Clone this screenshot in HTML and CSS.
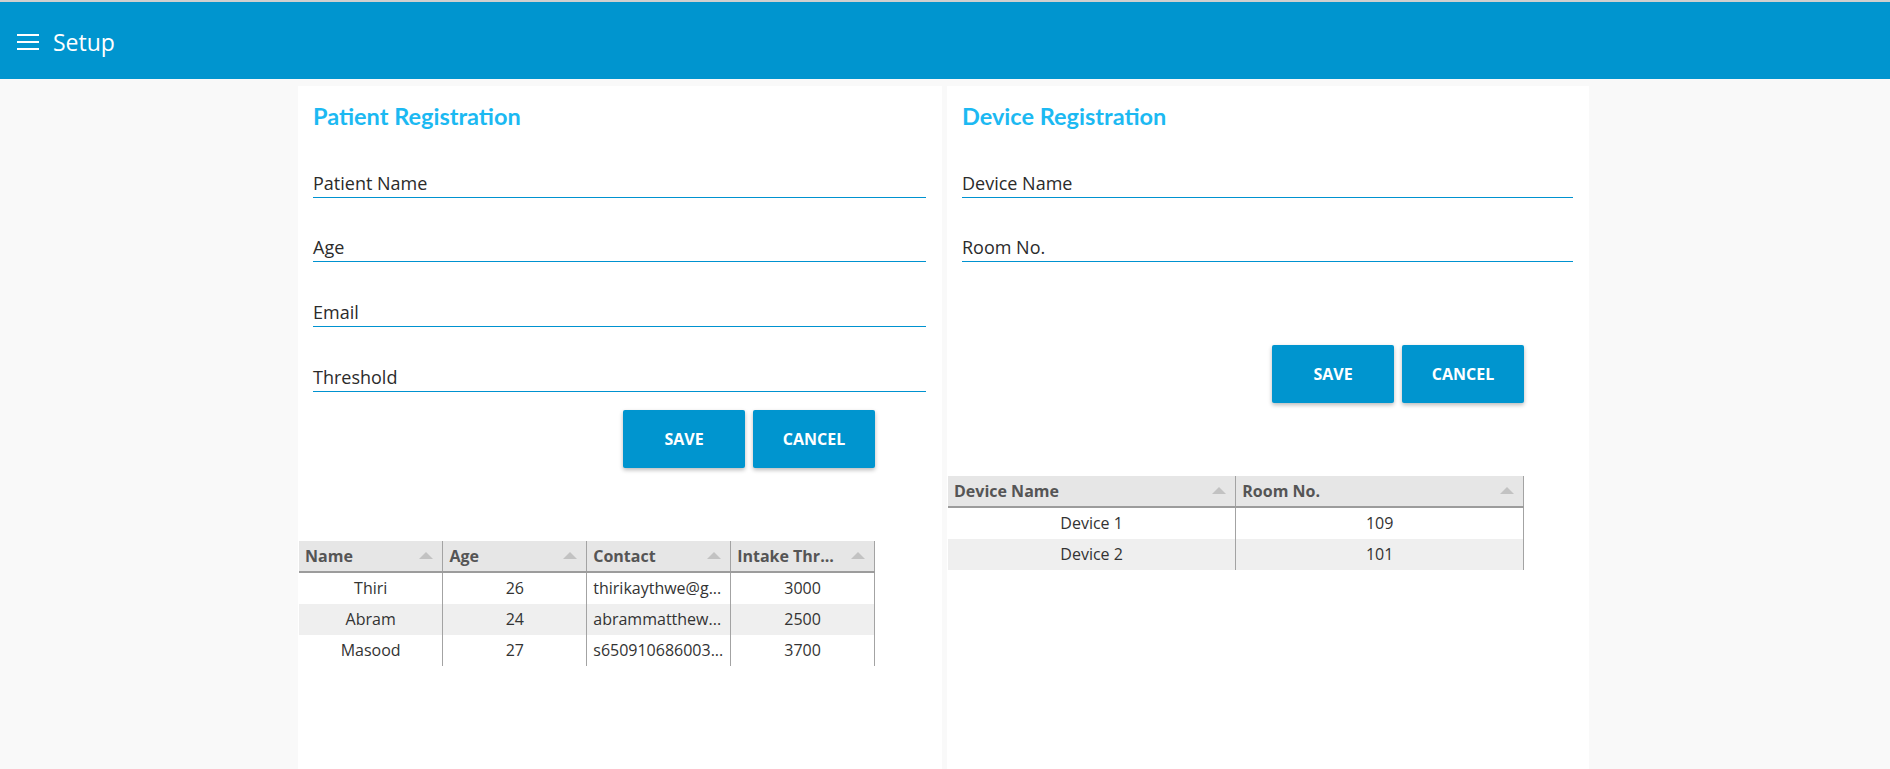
FILE: index.html
```html
<!DOCTYPE html>
<html>
<head>
<meta charset="utf-8">
<title>Setup</title>
<link rel="stylesheet" href="styles.css">
</head>
<body>
<div class="topline"></div>
<header class="appbar">
  <svg class="menu-icon" width="22" height="16" viewBox="0 0 22 16" aria-hidden="true">
    <path d="M0 1h22M0 8h22M0 15h22" stroke="#fff" stroke-width="2"/>
  </svg>
  <span class="appbar-title">Setup</span>
</header>
<main class="page">
  <section class="card">
    <div class="form">
      <h2 class="card-title">Patient Registration</h2>
      <div class="field"><span class="field-label">Patient Name</span></div>
      <div class="field"><span class="field-label">Age</span></div>
      <div class="field"><span class="field-label">Email</span></div>
      <div class="field"><span class="field-label">Threshold</span></div>
    </div>
    <div class="lower">
      <div class="actions">
        <button class="btn">SAVE</button>
        <button class="btn">CANCEL</button>
      </div>
      <table class="grid">
        <thead>
          <tr>
            <th><span>Name</span><i class="sort"></i></th>
            <th><span>Age</span><i class="sort"></i></th>
            <th><span>Contact</span><i class="sort"></i></th>
            <th><span>Intake Thr...</span><i class="sort"></i></th>
          </tr>
        </thead>
        <tbody>
          <tr><td>Thiri</td><td>26</td><td class="left">thirikaythwe@g...</td><td>3000</td></tr>
          <tr class="alt"><td>Abram</td><td>24</td><td class="left">abrammatthew...</td><td>2500</td></tr>
          <tr><td>Masood</td><td>27</td><td class="left">s650910686003...</td><td>3700</td></tr>
        </tbody>
      </table>
    </div>
  </section>
  <section class="card">
    <div class="form">
      <h2 class="card-title">Device Registration</h2>
      <div class="field"><span class="field-label">Device Name</span></div>
      <div class="field"><span class="field-label">Room No.</span></div>
      <div class="field-spacer"></div>
    </div>
    <div class="lower">
      <div class="actions">
        <button class="btn">SAVE</button>
        <button class="btn">CANCEL</button>
      </div>
      <table class="grid">
        <thead>
          <tr>
            <th><span>Device Name</span><i class="sort"></i></th>
            <th><span>Room No.</span><i class="sort"></i></th>
          </tr>
        </thead>
        <tbody>
          <tr><td>Device 1</td><td>109</td></tr>
          <tr class="alt"><td>Device 2</td><td>101</td></tr>
        </tbody>
      </table>
    </div>
  </section>
</main>
</body>
</html>
```
FILE: styles.css
```css
html, body {
  margin: 0;
  padding: 0;
}
body {
  background: #f9f9f9;
  font-family: "Open Sans", "Noto Sans", sans-serif;
  color: #333;
  min-height: 100vh;
  overflow: hidden;
}
.topline {
  height: 2px;
  background: #cfcfcf;
}
.appbar {
  height: 77px;
  background: #0095cf;
  display: flex;
  align-items: center;
  padding: 3px 0 0 17px;
  box-sizing: border-box;
  gap: 14px;
}
.menu-icon {
  display: block;
  flex: none;
}
.appbar-title {
  color: #fff;
  font-size: 23px;
  line-height: 30px;
  font-weight: 400;
}
.page {
  display: grid;
  grid-template-columns: 644px 642px;
  gap: 5px;
  justify-content: center;
  margin: 7px 0 0;
  padding-right: 3px;
}
.card {
  background: #fff;
  min-height: calc(100vh - 86px);
}
.form {
  padding: 14px 16px 0 15px;
}
.card-title {
  margin: 0 0 1px;
  font-family: Lato, "Open Sans", sans-serif;
  font-weight: 700;
  font-size: 23.5px;
  line-height: 32px;
  color: #1cb9f2;
}
.field {
  padding: 37.7px 0 2px;
  border-bottom: 1px solid #0092d0;
}
.field-label {
  display: block;
  font-size: 18px;
  line-height: 24px;
  color: #2b2b2b;
}
.field-spacer {
  height: 65px;
}
.lower {
  width: 576px;
  margin-left: 1px;
}
.actions {
  display: flex;
  justify-content: flex-end;
  gap: 8px;
  margin-top: 18px;
}
.btn {
  width: 122px;
  height: 58px;
  border: 0;
  border-radius: 2px;
  background: #0095cf;
  color: #fff;
  font-family: "Open Sans", sans-serif;
  font-weight: 700;
  font-size: 16px;
  box-shadow: 0 2px 4px rgba(0, 0, 0, 0.28);
  padding: 0;
}
.grid {
  width: 576px;
  margin-top: 73px;
  table-layout: fixed;
  border-collapse: collapse;
  border-spacing: 0;
}
.grid th {
  background: #e6e6e6;
  height: 30px;
  padding: 1px 9px 0 6px;
  box-sizing: border-box;
  border-right: 1px solid #a3a3a3;
  border-bottom: 2px solid #9c9c9c;
  text-align: left;
  font-weight: 700;
  font-size: 16px;
  line-height: 29px;
  color: #555;
  white-space: nowrap;
}
.grid th span {
  float: left;
}
.sort {
  float: right;
  width: 0;
  height: 0;
  margin-top: 10px;
  border-left: 7px solid transparent;
  border-right: 7px solid transparent;
  border-bottom: 7px solid #c2c2c2;
}
.grid td {
  height: 31px;
  padding: 0 6px;
  border-right: 1px solid #a3a3a3;
  text-align: center;
  font-size: 16px;
  line-height: 31px;
  color: #333;
  white-space: nowrap;
  overflow: hidden;
}
.grid td.left {
  text-align: left;
}
.grid tr.alt td {
  background: #efefef;
}
```
